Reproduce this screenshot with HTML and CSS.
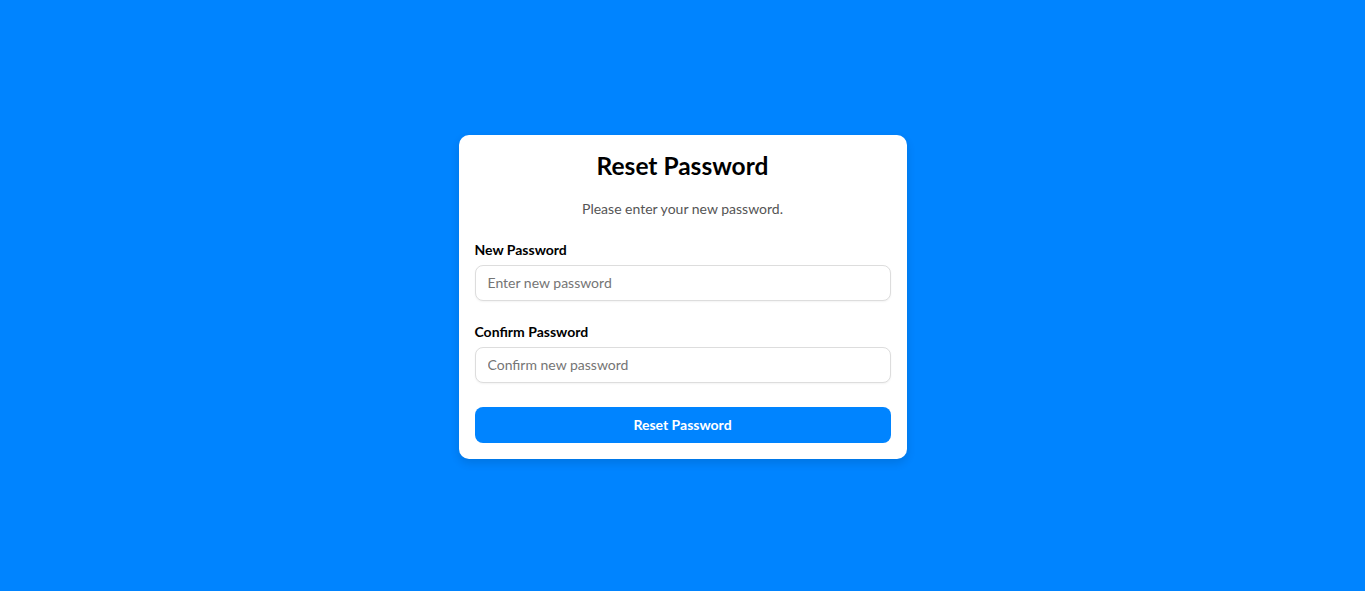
FILE: index.html
```html
<!DOCTYPE html>
<html lang="en">
<head>
<meta charset="utf-8">
<title>Reset Password</title>
<link rel="stylesheet" href="styles.css">
</head>
<body>
<main class="page">
  <form class="card">
    <h1 class="title">Reset Password</h1>
    <p class="subtitle">Please enter your new password.</p>
    <div class="field">
      <label class="label" for="np">New Password</label>
      <input class="input" id="np" type="password" placeholder="Enter new password">
    </div>
    <div class="field">
      <label class="label" for="cp">Confirm Password</label>
      <input class="input" id="cp" type="password" placeholder="Confirm new password">
    </div>
    <button class="btn" type="button">Reset Password</button>
  </form>
</main>
</body>
</html>
```

FILE: styles.css
```css
* { box-sizing: border-box; }
html, body { margin: 0; padding: 0; }
body {
  background: #0084ff;
  font-family: "Lato", "Noto Sans", sans-serif;
}
.page {
  min-height: 100vh;
  padding-top: 2px;
  display: flex;
  align-items: center;
  justify-content: center;
}
.card {
  width: 448px;
  background: #fff;
  border-radius: 10px;
  padding: 16px;
  box-shadow: 0 4px 10px rgba(0, 0, 0, 0.12);
  display: flex;
  flex-direction: column;
}
.title {
  margin: 0 0 18px;
  font-size: 24.5px;
  line-height: 30px;
  font-weight: 700;
  color: #000;
  text-align: center;
}
.subtitle {
  margin: 0 0 21px;
  font-size: 14px;
  line-height: 20px;
  color: #555;
  text-align: center;
}
.field {
  display: flex;
  flex-direction: column;
  margin-bottom: 21px;
}
.field + .field { margin-bottom: 24px; }
.label {
  font-size: 14px;
  line-height: 20px;
  font-weight: 700;
  color: #000;
  margin-bottom: 5px;
}
.input {
  height: 36px;
  border: 1px solid #ddd;
  border-radius: 8px;
  padding: 0 12px;
  font-family: inherit;
  font-size: 14px;
  color: #333;
  box-shadow: 0 1px 2px rgba(0,0,0,0.05);
}
.input::placeholder { color: #757575; }
.btn {
  height: 36px;
  border: none;
  border-radius: 8px;
  background: #0084ff;
  color: #fff;
  font-family: inherit;
  font-size: 14px;
  font-weight: 700;
}
```
